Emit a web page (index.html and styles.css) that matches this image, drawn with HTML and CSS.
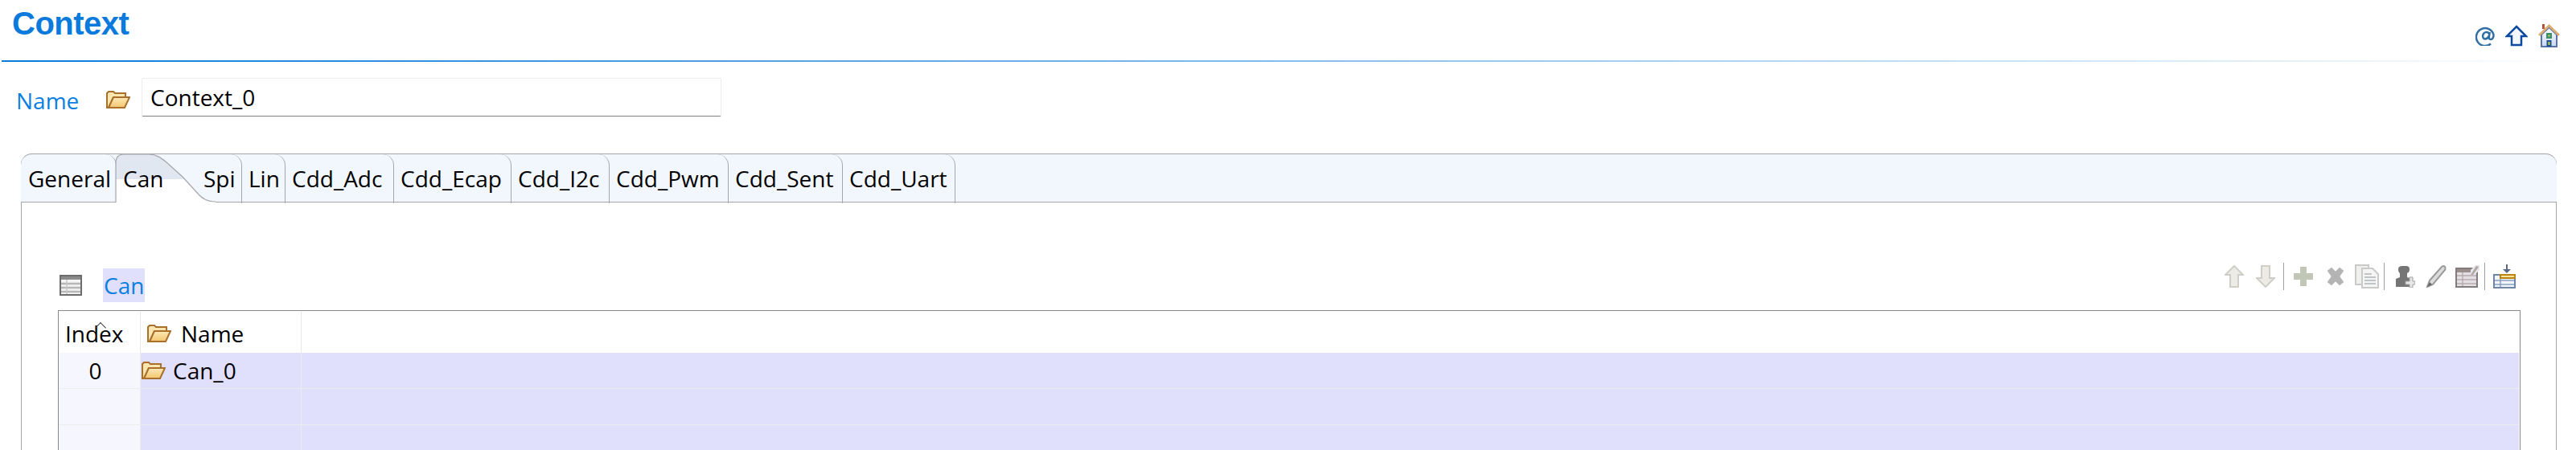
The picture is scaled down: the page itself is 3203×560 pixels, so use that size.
FILE: index.html
```html
<!DOCTYPE html>
<html lang="en">
<head>
    <meta charset="UTF-8">
    <title>Context</title>
    <link rel="stylesheet" href="styles.css">
</head>
<body>
    <svg class="defs" width="0" height="0">
        <defs>
            <linearGradient id="folderFront" x1="0" y1="0" x2="0" y2="1">
                <stop offset="0" stop-color="#fdeab8"/>
                <stop offset="1" stop-color="#f3c56f"/>
            </linearGradient>
            <linearGradient id="wall" x1="0" y1="0" x2="0" y2="1">
                <stop offset="0" stop-color="#ffffff"/>
                <stop offset="1" stop-color="#c8d8f0"/>
            </linearGradient>
            <linearGradient id="tabFill" x1="0" y1="0" x2="0" y2="1">
                <stop offset="0.5" stop-color="#e0e7f0"/>
                <stop offset="0.5" stop-color="#ffffff"/>
            </linearGradient>
            <symbol id="folder" viewBox="0 0 30 22">
                <path d="M1 21V3l2-2h6l2 2h13v5H9L3 21z" fill="#fbe6b0" stroke="#a96f2c" stroke-width="2"/>
                <path d="M3 21L9 8h20l-6 13z" fill="url(#folderFront)" stroke="#a96f2c" stroke-width="2"/>
            </symbol>
        </defs>
    </svg>

    <div class="header">
        <h1 class="title">Context</h1>
        <div class="top-icons">
            <svg width="24" height="26" viewBox="0 0 24 26"><path d="M19 23.500A11 11 0 1 1 22.500 12c0 4-1.500 6-3.500 6s-2.500-1.500-2-4l.8-5M16.800 11c-.8-2.500-5-3-6.800 0s-.5 6.500 2 6.500 4-2 4.800-4" fill="none" stroke="#2f6fa4" stroke-width="2.500"/></svg>
            <svg width="28" height="27" viewBox="0 0 28 27"><path d="M14 2L26 14h-6v11H8V14H2z" fill="#f4f8fd" stroke="#0b4a9e" stroke-width="2.500"/></svg>
            <svg width="27" height="30" viewBox="0 0 27 30">
                <path d="M4 14v15h19V14L13.500 5z" fill="url(#wall)" stroke="#5a73a8" stroke-width="2"/>
                <path d="M5 1h3v6H5z" fill="#b5523a"/>
                <path d="M1 15L13.500 3 26 15" fill="none" stroke="#d9ad74" stroke-width="3"/>
                <path d="M10 12h7v7h-7z" fill="#3f8f6a"/>
                <path d="M12.500 14.500h2v2h-2z" fill="#d8d84a"/>
                <path d="M10.500 21h6v8h-6z" fill="#1f4f94"/>
                <path d="M12.500 23h2v4h-2z" fill="#c8d83a"/>
            </svg>
        </div>
    </div>
    <div class="rule"></div>

    <div class="name-row">
        <label class="name-label">Name</label>
        <svg class="folder-icon"><use href="#folder"/></svg>
        <div class="name-field">Context_0</div>
    </div>

    <div class="folder">
        <div class="tabs">
            <div class="tab">General</div>
            <div class="tab tab-active">
                <svg class="tab-curve" width="126" height="62" viewBox="0 0 126 62">
                    <path d="M1 61V12Q1 1 11 1H42C52 1 58 6 64 11L84 29L104 51Q112 60 125 60V62H1z" fill="url(#tabFill)"/>
                    <path d="M1 61V12Q1 1 11 1H42C52 1 58 6 64 11L84 29L104 51Q112 60 125 60" fill="none" stroke="#a4a6ac" stroke-width="1.200"/>
                </svg>
                <span>Can</span>
            </div>
            <div class="tab tab-next">Spi</div>
            <div class="tab">Lin</div>
            <div class="tab">Cdd_Adc</div>
            <div class="tab">Cdd_Ecap</div>
            <div class="tab">Cdd_I2c</div>
            <div class="tab">Cdd_Pwm</div>
            <div class="tab">Cdd_Sent</div>
            <div class="tab">Cdd_Uart</div>
        </div>

        <div class="panel">
            <div class="section-head">
                <div class="section-title">
                    <svg width="28" height="26" viewBox="0 0 28 26">
                        <path d="M1 1h26v24H1z" fill="#f4f4f4" stroke="#6c6c6c" stroke-width="2"/>
                        <path d="M2 2h24v4H2z" fill="#8a8a8a"/>
                        <path d="M2 11h24M2 16h24M2 21h24" stroke="#b8b8b8" stroke-width="2.500"/>
                        <path d="M9 6v18" stroke="#c8c8c8" stroke-width="1.500"/>
                    </svg>
                    <span class="section-name">Can</span>
                </div>
                <div class="toolbar">
                    <svg width="24" height="28" viewBox="0 0 24 28"><path d="M12 1L23 12h-6v15H7V12H1z" fill="#ecebe5" stroke="#cfcfc8" stroke-width="2"/></svg>
                    <svg class="tool-down" width="24" height="28" viewBox="0 0 24 28"><path d="M12 27L23 16h-6V1H7v15H1z" fill="#ecebe5" stroke="#cfcfc8" stroke-width="2"/></svg>
                    <span class="sep sep-move"></span>
                    <svg class="tool-add" width="24" height="24" viewBox="0 0 24 24"><path d="M8 0h8v8h8v8h-8v8H8v-8H0V8h8z" fill="#c2c6b6"/></svg>
                    <svg class="tool-remove" width="26" height="24" viewBox="0 0 26 24"><path d="M3 5l5-4 5 5 5-5 5 4-5 7 5 7-5 4-5-5-5 5-5-4 5-7z" fill="#b4b4b4" stroke="#c4c4c4"/></svg>
                    <svg class="tool-copy" width="30" height="30" viewBox="0 0 30 30">
                        <path d="M1 1h16v24H1z" fill="#f0f0ee" stroke="#cacac8" stroke-width="2"/>
                        <path d="M9 5h13l7 7v17H9z" fill="#f4f5f4" stroke="#cacac8" stroke-width="2"/>
                        <path d="M12 12h9M12 16h14M12 20h14M12 24h14" stroke="#c0c4c6" stroke-width="2"/>
                    </svg>
                    <span class="sep sep-copy"></span>
                    <svg class="tool-person" width="24" height="28" viewBox="0 0 24 28">
                        <path d="M3 5q0-4 5-4h5q4 0 4 4t-3 5v5l3 1v11H0V17l5-2v-5Q3 9 3 5z" fill="#757575"/>
                        <path d="M12 20h5v-5h4v5h3v4h-3v4h-4v-4h-5z" fill="#e6e6e6" stroke="#a0a0a0"/>
                    </svg>
                    <svg class="tool-pencil" width="26" height="28" viewBox="0 0 26 28"><path d="M5 19L20 2q3-2 4 0t0 4L9 24l-7 3z" fill="#dcdcdc" stroke="#9a9a9a" stroke-width="2"/><path d="M2 27l3-6 3 3z" fill="#666"/></svg>
                    <svg class="tool-edit" width="30" height="28" viewBox="0 0 30 28">
                        <path d="M1 4h26v23H1z" fill="#e4dfe2" stroke="#847c7c" stroke-width="2"/>
                        <path d="M2 5h24v4H2z" fill="#9a8e8e"/>
                        <path d="M2 13h24M2 18h24M2 23h24M9 9v17" stroke="#b8acae" stroke-width="1.500"/>
                        <path d="M19 6l6-6h5v6l-6 6h-5z" fill="#e4e4f4"/>
                        <path d="M19 12l7-11 3 1-7 10z" fill="#b4a898"/>
                    </svg>
                    <span class="sep sep-table"></span>
                    <svg class="tool-insert" width="28" height="30" viewBox="0 0 28 30">
                        <path d="M17 0v8" stroke="#5a6a84" stroke-width="2"/>
                        <path d="M12 6h10l-5 5z" fill="#5a6a84"/>
                        <path d="M1 13h26v16H1z" fill="#f2f6fc" stroke="#6f86a8" stroke-width="2"/>
                        <path d="M2 20h24M2 25h24M9 14v14" stroke="#8aa0c0" stroke-width="1.500"/>
                        <path d="M9 13h18v4H9z" fill="#f8e6a0" stroke="#bd8412" stroke-width="2"/>
                    </svg>
                </div>
            </div>

            <div class="grid">
                <div class="head-cell head-index">Index<span class="sort-caret"></span></div>
                <div class="head-cell head-name"><svg class="folder-icon"><use href="#folder"/></svg>Name</div>
                <div class="head-cell"></div>

                <div class="cell cell-index">0</div>
                <div class="cell cell-name"><svg class="folder-icon"><use href="#folder"/></svg>Can_0</div>
                <div class="cell cell-fill"></div>

                <div class="cell cell-index"></div>
                <div class="cell cell-name"></div>
                <div class="cell cell-fill"></div>

                <div class="cell cell-index"></div>
                <div class="cell cell-name"></div>
                <div class="cell cell-fill"></div>
            </div>
        </div>
    </div>
</body>
</html>
```

FILE: styles.css
```css
*{
    box-sizing: border-box;
    padding: 0;
    margin: 0;
}
html,body{
    height: 100%;
}
body{
    background-color: white;
    font-family: "Open Sans", "Noto Sans", sans-serif;
    font-size: 28px;
    color: black;
    overflow: hidden;
    display: flex;
    flex-direction: column;
}
.defs{
    position: absolute;
}
.folder-icon{
    width: 30px;
    height: 22px;
    flex: none;
}

/* top title */
.header{
    height: 75px;
    display: flex;
    justify-content: space-between;
    padding: 7px 20px 0 15px;
}
.title{
    font-family: "Liberation Sans", sans-serif;
    font-size: 40px;
    font-weight: bold;
    letter-spacing: -0.5px;
    line-height: 44px;
    color: #0a7bdc;
}
.top-icons{
    display: flex;
    gap: 13px;
    align-items: center;
    height: 44px;
    margin-top: 15px;
}
.rule{
    height: 2px;
    flex: none;
    margin-left: 2px;
    background: linear-gradient(to right, #0a7bdc, #ffffff);
}

/* name row */
.name-row{
    display: flex;
    align-items: center;
    height: 48px;
    margin: 20px 0 0 20px;
}
.name-label{
    width: 112px;
    color: #0a7fe0;
    padding-top: 8px;
}
.name-row .folder-icon{
    margin-top: 6px;
}
.name-field{
    width: 721px;
    height: 48px;
    margin-left: 14px;
    padding-left: 10px;
    line-height: 46px;
    background-color: white;
    border: 1px solid #ececec;
    border-bottom: 1px solid #808080;
    border-radius: 2px;
}

/* tab folder */
.folder{
    flex: 1;
    min-height: 0;
    display: flex;
    flex-direction: column;
    margin: 46px 24px 0 26px;
    border-left: 1px solid #a4a6ac;
    border-right: 1px solid #a4a6ac;
    border-top-left-radius: 14px;
    border-top-right-radius: 14px;
}
.tabs{
    height: 61px;
    flex: none;
    display: grid;
    grid-template-columns: 118px 100px 56px 54px 135px 146px 122px 148px 142px 140px 1fr;
    background-color: #f2f7fe;
    border-top: 1px solid #a4a6ac;
    border-bottom: 1px solid #a4a6ac;
    border-top-left-radius: 14px;
    border-top-right-radius: 14px;
    margin-left: -1px;
    margin-right: -1px;
    padding-left: 1px;
}
.tab{
    border-right: 1px solid #a4a6ac;
    border-top-right-radius: 14px;
    padding-left: 8px;
    line-height: 61px;
    white-space: nowrap;
}
.tab-active{
    position: relative;
    border-right: none;
}
.tab-active span{
    position: relative;
}
.tab-curve{
    position: absolute;
    left: -2px;
    top: -1px;
}
.tab-next{
    position: relative;
}

/* panel */
.panel{
    flex: 1;
    min-height: 0;
    display: flex;
    flex-direction: column;
    padding: 74px 44px 0 45px;
    overflow: hidden;
}
.section-head{
    display: flex;
    justify-content: space-between;
    align-items: flex-start;
    height: 60px;
    flex: none;
}
.section-title{
    display: flex;
    align-items: center;
    gap: 26px;
    padding-left: 2px;
    margin-top: 8px;
}
.section-name{
    height: 42px;
    line-height: 42px;
    padding: 0 1px;
    color: #0a7fe0;
    background-color: #e0dffc;
}
.toolbar{
    display: flex;
    align-items: center;
    height: 36px;
    padding-right: 6px;
}
.sep{
    width: 1px;
    height: 34px;
    background-color: #a0a0a0;
}
.tool-down{
    margin-left: 15px;
}
.sep-move{
    margin-left: 10px;
}
.tool-add{
    margin-left: 12px;
}
.tool-remove{
    margin-left: 15px;
}
.tool-copy{
    margin-left: 11px;
}
.sep-copy{
    margin-left: 6px;
}
.tool-person{
    margin-left: 14px;
}
.tool-pencil{
    margin-left: 13px;
}
.tool-edit{
    margin-left: 11px;
}
.sep-table{
    margin-left: 6px;
}
.tool-insert{
    margin-left: 10px;
}

/* table */
.grid{
    flex: 1;
    min-height: 0;
    display: grid;
    grid-template-columns: 102px 200px 1fr;
    grid-template-rows: 52px 45px 45px 45px;
    border: 1px solid #88888c;
    border-bottom: none;
    overflow: hidden;
    padding-right: 1px;
}
.head-cell{
    display: flex;
    align-items: center;
    background-color: white;
    border-right: 1px solid #e8e8e8;
    margin-top: 1px;
    position: relative;
    padding-top: 3px;
}
.head-cell:nth-child(3){
    border-right: none;
}
.head-index{
    padding-left: 8px;
}
.head-name{
    padding-left: 8px;
    gap: 12px;
}
.sort-caret{
    position: absolute;
    left: 47px;
    top: 15px;
    width: 10px;
    height: 10px;
    border-left: 1px solid #444;
    border-top: 1px solid #444;
    transform: rotate(45deg);
}
.cell{
    display: flex;
    align-items: center;
    border-bottom: 1px solid #ececec;
    border-right: 1px solid #ececec;
}
.cell-index{
    justify-content: center;
    background-color: #f6f6fe;
    padding-right: 10px;
}
.cell-name{
    background-color: #e0dffc;
    padding-left: 1px;
    gap: 9px;
}
.cell-fill{
    background-color: #e0dffc;
    border-right: none;
}
```
